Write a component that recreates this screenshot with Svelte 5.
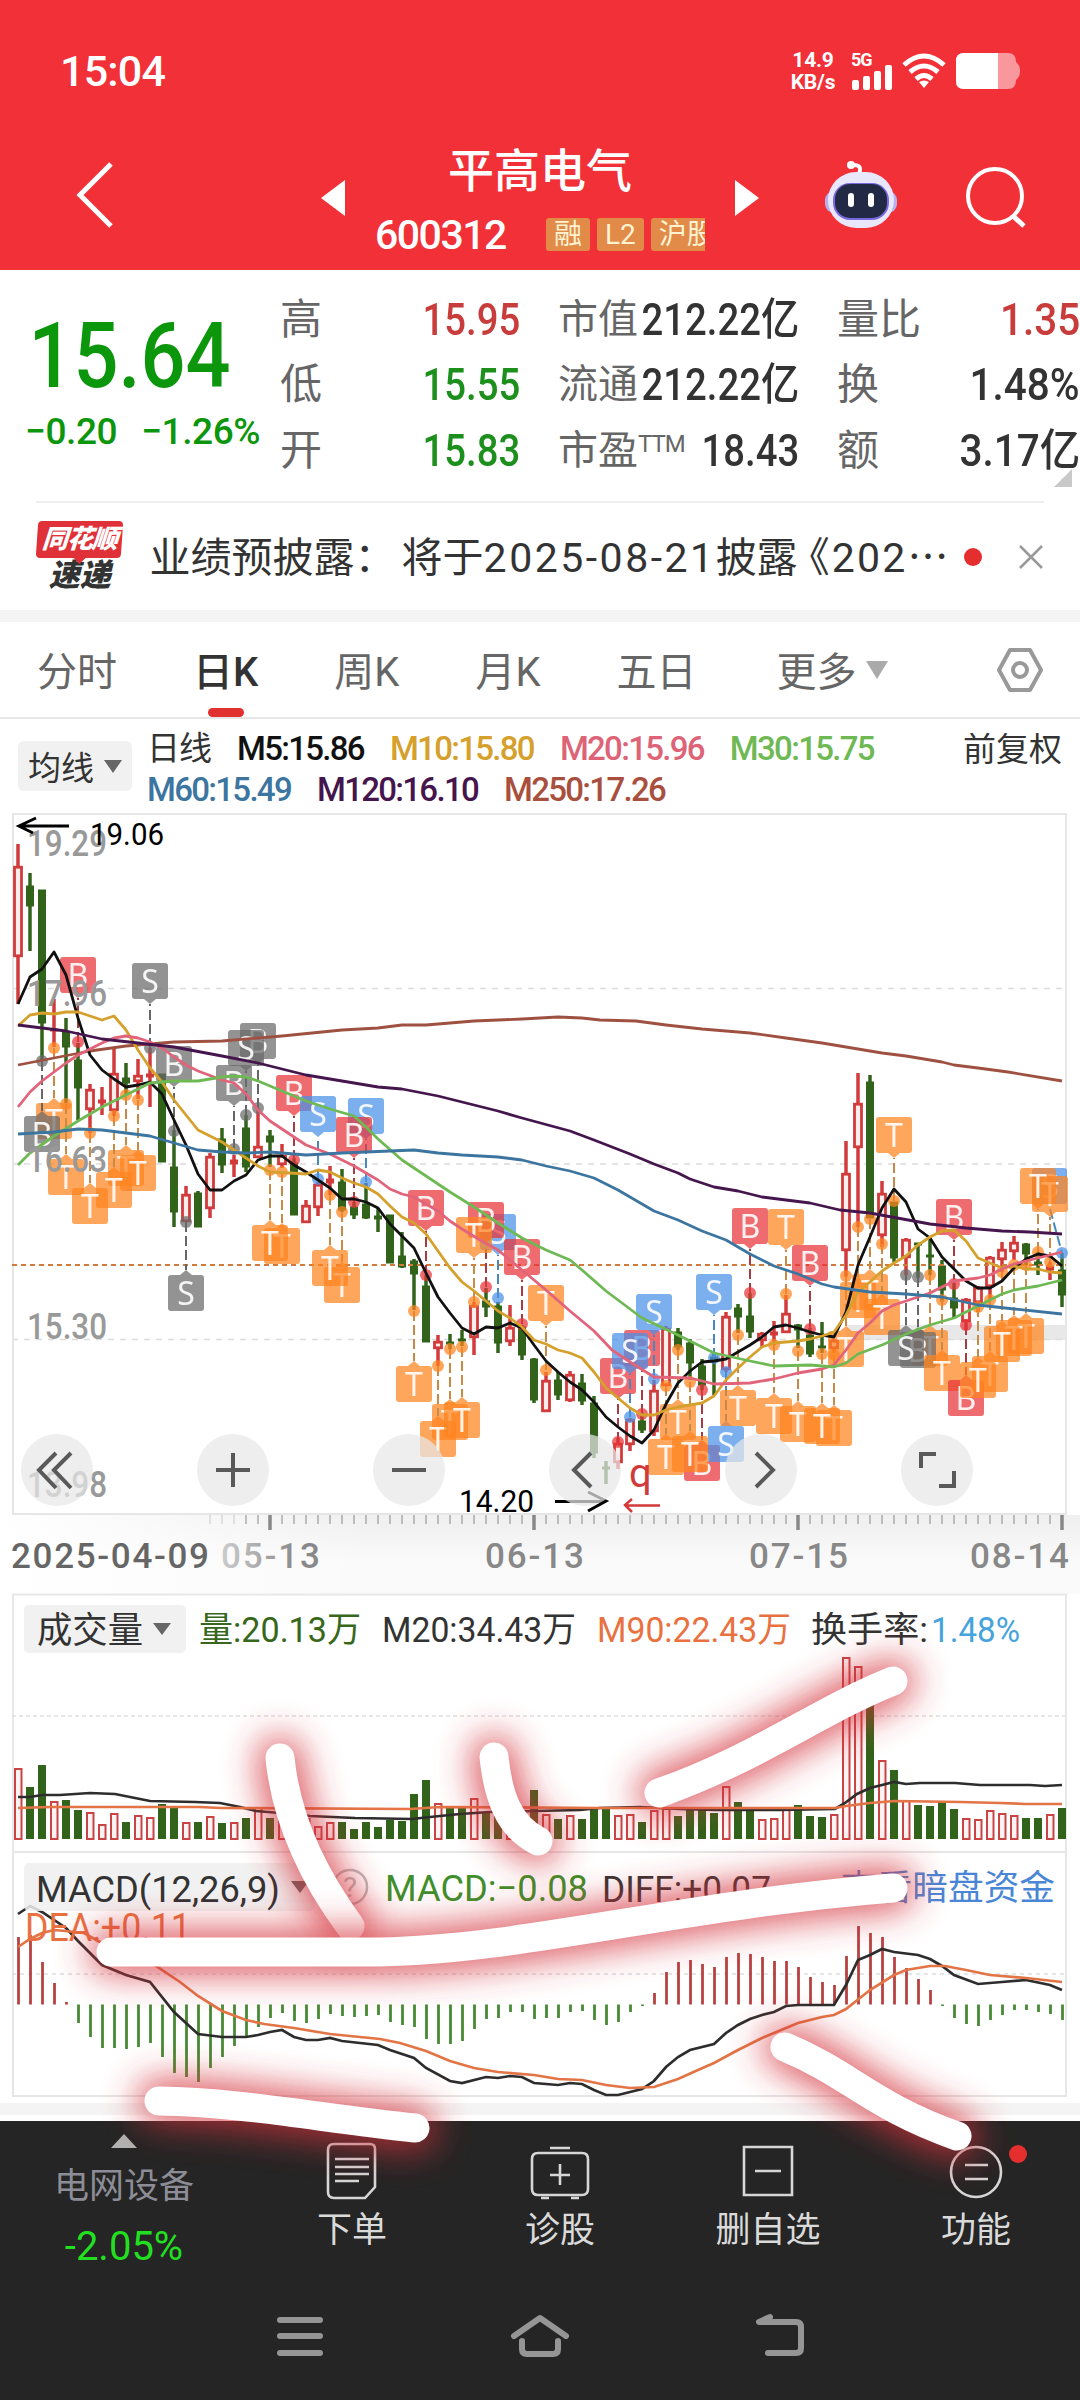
<script lang="ts">
  type Candle = [number, number, number, number, string];
  type Marker = [number, string, string, number, number];

  const x = (i: number) => 18 + i * 12;

  const tabs = ['分时', '日K', '周K', '月K', '五日'];

  const quotes = [
    ['高', '15.95', 'up', '市值', '212.22亿', '量比', '1.35', 'up'],
    ['低', '15.55', 'down', '流通', '212.22亿', '换', '1.48%', ''],
    ['开', '15.83', 'down', '市盈', '18.43', '额', '3.17亿', ''],
  ];

  // high, body top, body bottom, low (chart y), r = rise / g = fall
  const candles: Candle[] = [
    [844, 866, 957, 1004, 'r'], [873, 886, 906, 951, 'g'], [890, 890, 1023, 1060, 'g'],
    [999, 1029, 1031, 1047, 'r'], [1018, 1032, 1047, 1103, 'g'], [1043, 1060, 1088, 1120, 'g'],
    [1084, 1089, 1110, 1133, 'r'], [1087, 1100, 1103, 1115, 'r'], [1047, 1073, 1111, 1116, 'r'],
    [1063, 1078, 1083, 1095, 'g'], [1059, 1075, 1082, 1099, 'r'], [1048, 1074, 1077, 1107, 'r'],
    [1074, 1074, 1162, 1162, 'g'], [1130, 1167, 1212, 1227, 'g'], [1186, 1194, 1222, 1222, 'r'],
    [1191, 1193, 1227, 1227, 'g'], [1153, 1156, 1209, 1218, 'r'], [1128, 1139, 1165, 1173, 'g'],
    [1155, 1160, 1164, 1177, 'r'], [1115, 1128, 1167, 1172, 'g'], [1108, 1146, 1158, 1158, 'r'],
    [1130, 1136, 1142, 1167, 'g'], [1144, 1155, 1165, 1168, 'r'], [1158, 1163, 1215, 1215, 'g'],
    [1200, 1205, 1223, 1223, 'r'], [1182, 1184, 1208, 1216, 'r'], [1166, 1179, 1183, 1195, 'r'],
    [1169, 1182, 1210, 1212, 'g'], [1202, 1207, 1215, 1219, 'g'], [1183, 1204, 1218, 1219, 'g'],
    [1208, 1216, 1219, 1232, 'g'], [1215, 1215, 1263, 1263, 'g'], [1232, 1256, 1267, 1268, 'g'],
    [1259, 1261, 1274, 1310, 'g'], [1275, 1286, 1342, 1342, 'g'], [1335, 1341, 1349, 1366, 'r'],
    [1334, 1342, 1344, 1349, 'g'], [1330, 1339, 1341, 1346, 'g'], [1302, 1305, 1338, 1355, 'r'],
    [1288, 1301, 1307, 1317, 'g'], [1302, 1306, 1343, 1353, 'g'], [1305, 1327, 1342, 1346, 'r'],
    [1325, 1327, 1355, 1360, 'g'], [1358, 1359, 1400, 1403, 'g'], [1372, 1380, 1412, 1412, 'r'],
    [1372, 1380, 1395, 1400, 'g'], [1371, 1374, 1401, 1402, 'r'], [1374, 1383, 1401, 1405, 'g'],
    [1396, 1403, 1453, 1458, 'g'], [1461, 1467, 1469, 1484, 'g'], [1438, 1443, 1463, 1469, 'r'],
    [1418, 1419, 1445, 1451, 'r'], [1413, 1421, 1430, 1433, 'g'], [1380, 1390, 1432, 1436, 'r'],
    [1326, 1328, 1386, 1386, 'r'], [1328, 1332, 1347, 1350, 'g'], [1339, 1343, 1363, 1380, 'g'],
    [1359, 1366, 1385, 1390, 'g'], [1353, 1357, 1360, 1395, 'g'], [1312, 1316, 1370, 1372, 'r'],
    [1304, 1308, 1317, 1333, 'g'], [1293, 1316, 1332, 1338, 'g'], [1332, 1333, 1341, 1347, 'r'],
    [1321, 1332, 1335, 1345, 'r'], [1295, 1313, 1333, 1333, 'r'], [1324, 1325, 1330, 1348, 'g'],
    [1328, 1335, 1354, 1357, 'g'], [1322, 1346, 1348, 1353, 'g'], [1339, 1340, 1349, 1353, 'r'],
    [1141, 1173, 1251, 1277, 'r'], [1073, 1103, 1148, 1227, 'r'], [1075, 1082, 1218, 1218, 'g'],
    [1181, 1193, 1236, 1247, 'r'], [1202, 1202, 1258, 1262, 'g'], [1238, 1239, 1258, 1275, 'r'],
    [1243, 1243, 1245, 1278, 'g'], [1238, 1255, 1257, 1275, 'g'], [1260, 1266, 1290, 1302, 'g'],
    [1283, 1298, 1308, 1318, 'g'], [1298, 1299, 1322, 1330, 'r'], [1286, 1287, 1303, 1312, 'r'],
    [1256, 1257, 1287, 1300, 'r'], [1242, 1249, 1260, 1272, 'r'], [1236, 1242, 1252, 1260, 'r'],
    [1243, 1244, 1254, 1265, 'g'], [1252, 1262, 1265, 1275, 'g'], [1262, 1266, 1270, 1280, 'r'],
    [1253, 1270, 1295, 1307, 'g'],
  ];

  // candle index, letter, kind, badge top, dot y
  const markers: Marker[] = [
    [5, 'B', 'red', 957, 1042], [13, 'B', 'grey', 1046, 1131],
    [3, 'T', 'orange', 1103, 1048], [4, 'T', 'orange', 1159, 1104], [2, 'B', 'grey', 1116, 1061],
    [9, 'T', 'orange', 1150, 1095], [10, 'T', 'orange', 1155, 1100], [8, 'T', 'orange', 1172, 1116],
    [6, 'T', 'orange', 1188, 1133], [11, 'S', 'grey', 963, 1048], [20, 'B', 'grey', 1023, 1108],
    [19, 'S', 'grey', 1030, 1115], [18, 'B', 'grey', 1065, 1149], [23, 'B', 'red', 1075, 1160],
    [25, 'S', 'blue', 1096, 1179], [29, 'S', 'blue', 1098, 1182], [28, 'B', 'red', 1117, 1202],
    [14, 'S', 'grey', 1275, 1222], [22, 'T', 'orange', 1228, 1172], [21, 'T', 'orange', 1225, 1170],
    [27, 'T', 'orange', 1267, 1212], [26, 'T', 'orange', 1250, 1195], [34, 'B', 'red', 1190, 1275],
    [33, 'T', 'orange', 1366, 1311], [36, 'T', 'orange', 1404, 1349], [35, 'T', 'orange', 1421, 1366],
    [37, 'T', 'orange', 1402, 1347], [40, 'S', 'blue', 1214, 1298], [39, 'B', 'red', 1202, 1287],
    [38, 'T', 'orange', 1217, 1302], [42, 'B', 'red', 1239, 1324], [44, 'T', 'orange', 1285, 1370],
    [52, 'B', 'red', 1330, 1414], [50, 'B', 'red', 1358, 1442], [51, 'S', 'blue', 1333, 1417],
    [53, 'S', 'blue', 1294, 1379], [55, 'T', 'orange', 1404, 1350], [54, 'T', 'orange', 1439, 1386],
    [57, 'B', 'red', 1445, 1390], [56, 'T', 'orange', 1436, 1382], [58, 'S', 'blue', 1274, 1358],
    [59, 'S', 'blue', 1426, 1372], [60, 'T', 'orange', 1390, 1335], [61, 'B', 'red', 1208, 1293],
    [63, 'T', 'orange', 1398, 1345], [64, 'T', 'orange', 1209, 1294], [65, 'T', 'orange', 1406, 1351],
    [68, 'T', 'orange', 1410, 1355], [67, 'T', 'orange', 1408, 1354], [66, 'B', 'red', 1245, 1329],
    [69, 'T', 'orange', 1331, 1276], [70, 'T', 'orange', 1282, 1227], [71, 'T', 'orange', 1274, 1219],
    [72, 'T', 'orange', 1299, 1244], [73, 'T', 'orange', 1117, 1201], [76, 'T', 'orange', 1330, 1275],
    [75, 'B', 'grey', 1332, 1277], [74, 'S', 'grey', 1330, 1275], [77, 'T', 'orange', 1355, 1300],
    [78, 'B', 'red', 1199, 1284], [79, 'B', 'red', 1380, 1325], [81, 'T', 'orange', 1356, 1300],
    [80, 'T', 'orange', 1362, 1307], [84, 'T', 'orange', 1318, 1265], [83, 'T', 'orange', 1320, 1265],
    [82, 'T', 'orange', 1326, 1272], [86, 'T', 'orange', 1176, 1262], [85, 'T', 'orange', 1168, 1252],
  ];

  const averages = [
    { color: '#9f5141', points: '18,1065 54,1058 90,1051 126,1046 174,1042 222,1041 282,1036 342,1030 378,1028 402,1025 426,1025 474,1021 522,1019 558,1017 582,1018 600,1020 636,1021 666,1025 702,1029 726,1031 750,1033 786,1038 822,1043 858,1049 882,1053 906,1056 942,1062 954,1065 978,1068 1008,1072 1062,1081' },
    { color: '#111', points: '18,1004 30,977 42,969 54,952 66,975 78,1018 90,1055 102,1070 114,1079 126,1087 138,1085 150,1082 162,1094 174,1120 186,1145 198,1174 210,1190 222,1190 234,1181 246,1175 258,1160 270,1156 282,1156 294,1165 306,1172 318,1180 330,1188 342,1199 354,1199 366,1202 378,1208 390,1224 402,1236 414,1248 426,1273 438,1297 450,1313 462,1328 474,1334 486,1327 498,1328 510,1323 522,1328 534,1345 546,1361 558,1372 570,1382 582,1390 594,1402 606,1417 618,1427 630,1436 642,1443 654,1430 666,1404 678,1383 690,1371 702,1362 714,1361 726,1359 738,1352 750,1345 762,1337 774,1327 786,1325 798,1328 810,1332 822,1335 834,1337 846,1312 858,1265 870,1237 882,1208 894,1189 906,1202 918,1229 930,1238 942,1257 954,1269 966,1281 978,1288 990,1288 1002,1281 1014,1268 1026,1259 1038,1254 1050,1256 1062,1266' },
    { color: '#d6a02c', points: '18,1026 30,1015 42,1013 54,1014 66,1012 78,1012 90,1016 102,1020 114,1016 126,1030 138,1050 150,1068 162,1082 174,1100 186,1115 198,1130 222,1142 234,1150 246,1158 258,1166 270,1172 290,1173 306,1174 318,1170 330,1172 342,1178 354,1183 366,1187 378,1194 390,1206 402,1217 414,1223 426,1234 438,1251 450,1268 462,1282 474,1291 486,1301 498,1311 510,1318 522,1327 534,1340 546,1344 558,1350 570,1353 582,1358 594,1372 606,1388 618,1398 630,1408 642,1415 654,1415 666,1410 678,1407 690,1405 702,1403 714,1396 726,1380 738,1368 750,1357 762,1347 774,1343 798,1341 810,1339 822,1336 834,1332 846,1315 858,1292 870,1282 882,1271 894,1263 906,1256 918,1245 930,1237 942,1231 954,1230 966,1241 978,1258 990,1263 1002,1268 1014,1266 1026,1269 1038,1269 1050,1272 1062,1273' },
    { color: '#e2647a', points: '18,1107 30,1092 42,1081 54,1072 66,1063 78,1055 90,1049 102,1043 114,1038 126,1036 138,1038 150,1042 162,1048 174,1057 186,1065 198,1071 222,1080 234,1083 246,1094 258,1110 270,1121 282,1129 306,1145 330,1154 342,1160 354,1166 378,1180 390,1189 402,1194 414,1197 426,1204 438,1211 450,1221 462,1229 480,1240 498,1250 522,1270 546,1290 570,1311 594,1331 612,1350 630,1362 654,1377 690,1378 714,1384 750,1383 774,1379 798,1373 822,1369 834,1365 846,1350 858,1333 870,1323 882,1311 894,1305 906,1301 930,1293 942,1287 954,1281 978,1278 990,1275 1002,1269 1014,1264 1038,1258 1062,1252' },
    { color: '#6fb955', points: '18,1165 30,1153 54,1136 78,1121 102,1107 126,1095 150,1083 174,1081 198,1081 222,1077 234,1076 246,1077 258,1081 282,1091 306,1101 330,1109 354,1116 366,1127 378,1139 402,1160 426,1176 450,1192 474,1207 498,1223 522,1238 546,1250 570,1260 582,1270 606,1291 642,1318 678,1335 714,1353 750,1361 774,1366 810,1365 834,1367 846,1363 858,1354 882,1345 906,1334 930,1325 954,1318 978,1306 1002,1294 1014,1290 1038,1286 1062,1280' },
    { color: '#3c759f', points: '18,1134 54,1132 78,1129 102,1130 126,1133 150,1136 174,1143 198,1150 222,1152 246,1153 270,1152 306,1155 342,1153 366,1152 390,1151 414,1150 438,1153 462,1155 498,1157 522,1160 546,1166 570,1171 594,1178 618,1190 654,1211 678,1220 702,1231 726,1240 750,1254 774,1266 798,1274 822,1284 834,1287 870,1292 906,1294 942,1297 978,1305 1014,1309 1062,1314' },
    { color: '#45154d', points: '18,1025 66,1031 102,1039 138,1043 174,1047 222,1056 258,1063 282,1069 306,1075 342,1081 378,1087 402,1089 438,1096 474,1105 498,1111 522,1118 570,1131 594,1140 630,1154 654,1164 678,1173 690,1179 714,1187 738,1191 762,1197 786,1200 810,1203 840,1210 870,1213 930,1224 966,1228 1002,1231 1030,1232 1062,1234' },
  ];

  const levels: [string, number][] = [['19.29', 856], ['17.96', 1006], ['16.63', 1172], ['15.30', 1339], ['13.98', 1497]];
  const dates: [string, number][] = [['06-13', 486], ['07-15', 750], ['08-14', 971]];
  const ticks = Array.from({ length: 72 }, (_, i) => 210 + i * 12);

  const volumes = [
    1768, 1787, 1765, 1801, 1800, 1810, 1812, 1824, 1813, 1822, 1815, 1817, 1804, 1806, 1822, 1822,
    1816, 1823, 1822, 1818, 1807, 1818, 1813, 1825, 1818, 1826, 1822, 1822, 1829, 1822, 1827, 1820,
    1821, 1794, 1780, 1803, 1808, 1806, 1798, 1812, 1812, 1817, 1813, 1790, 1814, 1819, 1815, 1819,
    1809, 1808, 1815, 1814, 1822, 1810, 1808, 1816, 1809, 1810, 1813, 1786, 1802, 1810, 1819, 1818,
    1807, 1805, 1816, 1817, 1814, 1657, 1666, 1700, 1760, 1770, 1800, 1805, 1806, 1801, 1809, 1818,
    1819, 1810, 1813, 1815, 1818, 1818, 1814, 1808,
  ];

  const macd = [
    1937, 1935, 1962, 1983, 2002, 2023, 2037, 2048, 2048, 2049, 2047, 2043, 2057, 2073, 2077, 2082,
    2068, 2057, 2046, 2036, 2027, 2018, 2013, 2021, 2023, 2019, 2014, 2016, 2017, 2016, 2015, 2022,
    2025, 2027, 2039, 2044, 2044, 2041, 2029, 2019, 2018, 2012, 2012, 2019, 2018, 2018, 2012, 2011,
    2020, 2025, 2022, 2012, 2006, 1993, 1972, 1962, 1960, 1964, 1967, 1957, 1953, 1954, 1957, 1961,
    1961, 1967, 1977, 1982, 1985, 1956, 1926, 1933, 1937, 1957, 1968, 1979, 1990, 2006, 2018, 2024,
    2026, 2020, 2015, 2010, 2010, 2012, 2014, 2020,
  ];

  const strokes = [
    'M280 1758C285 1808 306 1866 350 1926',
    'M494 1757C498 1795 508 1826 538 1841',
    'M893 1681C820 1710 760 1757 659 1793',
    'M111 1952H380C520 1950 680 1905 893 1888',
    'M159 2101C240 2102 320 2118 415 2128',
    'M785 2047C850 2074 872 2106 957 2136',
  ];
</script>

{#snippet label(text: string, left: number, base: number, size: number, width: number, fill: string)}
  <text x={left} y={base} font-size={size} textLength={width} lengthAdjust="spacingAndGlyphs" {fill}>{text}</text>
{/snippet}

<div class="page">
  <header>
    <div class="status">
      <span class="clock">15:04</span>
      <div class="status-right">
        <div class="speed"><span>14.9</span><span>KB/s</span></div>
        <div class="signal">
          <span>5G</span>
          <svg width="42" height="25" viewBox="0 0 42 25" fill="#fff">
            <rect x="1" y="15" width="7" height="10" rx="2" />
            <rect x="12" y="11" width="7" height="14" rx="2" />
            <rect x="23" y="6" width="7" height="19" rx="2" />
            <rect x="34" y="0" width="7" height="25" rx="2" />
          </svg>
        </div>
        <svg class="wifi" width="44" height="36" viewBox="0 0 44 36">
          <g fill="none" stroke="#fff" stroke-width="5">
            <path d="M2 12Q22 -6 42 12" />
            <path d="M8 19Q22 7 36 19" />
            <path d="M14 26Q22 19 30 26" />
          </g>
          <path d="M17 29Q22 26 27 29L22 35Z" fill="#fff" />
        </svg>
        <svg width="64" height="36" viewBox="0 0 64 36">
          <path d="M8 0H52Q60 0 60 9Q64 12 64 18Q64 24 60 27Q60 36 52 36H8Q0 36 0 28V8Q0 0 8 0Z" fill="#fff" opacity=".5" />
          <path d="M8 0H42V36H8Q0 36 0 28V8Q0 0 8 0Z" fill="#fff" />
        </svg>
      </div>
    </div>

    <div class="title-bar">
      <svg class="back" width="40" height="68" viewBox="0 0 40 68"><path d="M36 3L5 34L36 65" fill="none" stroke="#fff" stroke-width="5" /></svg>
      <svg class="prev" width="24" height="36" viewBox="0 0 24 36"><path d="M24 0V36L0 18Z" fill="#fff" /></svg>
      <div class="stock">
        <h1>平高电气</h1>
        <div class="code-row">
          <span class="code">600312</span>
          <div class="tags"><i>融</i><i>L2</i><i>沪股</i></div>
        </div>
      </div>
      <svg class="next" width="24" height="36" viewBox="0 0 24 36"><path d="M0 0V36L24 18Z" fill="#fff" /></svg>
      <svg class="robot" width="72" height="68" viewBox="0 0 72 68">
        <path d="M34 13Q38 3 27 4" fill="none" stroke="#fff" stroke-width="4" stroke-linecap="round" />
        <circle cx="26" cy="4" r="4" fill="#fff" />
        <rect x="0" y="30" width="72" height="22" rx="9" fill="#b9b0ee" />
        <rect x="3" y="11" width="66" height="56" rx="28" fill="#e9e7fb" />
        <rect x="8" y="22" width="56" height="37" rx="17" fill="#7a68df" />
        <rect x="10" y="23" width="52" height="34" rx="15" fill="#222945" />
        <rect x="23" y="32" width="6" height="14" rx="3" fill="#fff" />
        <rect x="43" y="32" width="6" height="14" rx="3" fill="#fff" />
      </svg>
      <svg class="search" width="62" height="62" viewBox="0 0 62 62" fill="none" stroke="#fff" stroke-width="4">
        <circle cx="30" cy="30" r="27" /><path d="M48 50L59 60" stroke-width="5" />
      </svg>
    </div>
  </header>

  <section class="quote">
    <div class="price">
      <strong>15.64</strong>
      <div class="change"><span>−0.20</span><span>−1.26%</span></div>
    </div>
    <div class="stats">
      {#each quotes as q, i}
        <span class="name">{q[0]}</span>
        <b class={q[2]}>{q[1]}</b>
        <span class="name second">{q[3]}{#if i === 2}<sup>TTM</sup>{/if}</span>
        <b>{q[4]}</b>
        <span class="name third">{q[5]}</span>
        <b class="last {q[7]}">{q[6]}</b>
      {/each}
    </div>
    <svg class="corner" width="18" height="18"><path d="M18 0V18H0Z" fill="#c9c9c9" /></svg>
  </section>

  <section class="news">
    <div class="logo">
      <span class="logo-top">同花顺</span>
      <span class="logo-bottom">速递</span>
    </div>
    <p>业绩预披露：<span class="rest">将于<span class="date">2025-08-21</span>披露</span><span class="book">《202⋯</span></p>
    <i class="dot"></i>
    <svg width="26" height="26" viewBox="0 0 26 26"><path d="M2 2L24 24M24 2L2 24" stroke="#999" stroke-width="2.5" /></svg>
  </section>

  <nav class="tabs">
    {#each tabs as tab}
      <span class:active={tab === '日K'}>{tab}</span>
    {/each}
    <span class="more">更多<i></i></span>
    <svg width="48" height="48" viewBox="0 0 48 48" fill="none" stroke="#999" stroke-width="4">
      <path d="M14 4H34L45 24L34 44H14L3 24Z" stroke-linejoin="round" /><circle cx="24" cy="24" r="7" />
    </svg>
  </nav>

  <section class="legend">
    <span class="select">均线<i></i></span>
    <div class="legend-lines">
      <div>
        <span class="day">日线</span>
        <span class="m5">M5:15.86</span>
        <span class="m10">M10:15.80</span>
        <span class="m20">M20:15.96</span>
        <span class="m30">M30:15.75</span>
      </div>
      <div>
        <span class="m60">M60:15.49</span>
        <span class="m120">M120:16.10</span>
        <span class="m250">M250:17.26</span>
      </div>
    </div>
    <span class="adjust">前复权</span>
  </section>

  <section class="chart">
    <svg width="1080" height="702" viewBox="0 813 1080 702">
      <rect x="846" y="1325" width="220" height="15" fill="#e8e8e8" />
      <g stroke="#dcdcdc" stroke-width="1.3" stroke-dasharray="6 6">
        <path d="M12 988.5H1066M12 1164H1066M12 1339.5H1066" />
      </g>
      <rect x="13" y="814" width="1053" height="700" fill="none" stroke="#e6e6e6" stroke-width="2" />
      {#each candles as [high, top, bottom, low, kind], i}
        <g class={kind === 'r' ? 'rise' : 'fall'}>
          {#if kind === 'r' && bottom - top > 6}
            <path d="M{x(i)} {high}V{top}M{x(i)} {bottom}V{low}" />
            <rect x={x(i) - 3.5} y={top + 1.2} width="7" height={bottom - top - 2.4} class="hollow" />
          {:else}
            <path d="M{x(i)} {high}V{low}" />
            <rect x={x(i) - 3.5} y={top} width="7" height={bottom - top} class="solid" />
          {/if}
        </g>
      {/each}
      <path d="M12 1265H1066" stroke="#d07a3c" stroke-width="2" stroke-dasharray="5 4" />
      <g class="marker blue">
        <path class="lead" d="M1050 1209L1062 1253" />
        <circle cx="1062" cy="1253" r="6" />
        <rect x="1032" y="1168" width="35" height="36" rx="3" />
        <text x="1050" y="1198" text-anchor="middle">S</text>
      </g>
      {#each markers as [i, letter, kind, top, dot]}
        <g class="marker {kind}">
          <path class="lead" d="M{x(i)} {dot}V{top > dot ? top - 5 : top + 41}" />
          <circle cx={x(i)} cy={dot} r="6" />
          {#if top > dot}
            <path d="M{x(i) - 6} {top}L{x(i)} {top - 5}L{x(i) + 6} {top}Z" />
          {:else}
            <path d="M{x(i) - 6} {top + 36}L{x(i)} {top + 41}L{x(i) + 6} {top + 36}Z" />
          {/if}
          <rect x={x(i) - 18} y={top} width="36" height="36" rx="3" />
          <text x={x(i)} y={top + 30} text-anchor="middle">{letter}</text>
        </g>
      {/each}
      {#each averages as line}
        <polyline points={line.points} fill="none" stroke={line.color} stroke-width="2.8" stroke-linejoin="round" />
      {/each}
      <g class="levels">
        {#each levels as [text, base]}
          {@render label(text, 27, base, 36, 80, '#999')}
        {/each}
      </g>
      {@render label('19.06', 90, 845, 32, 74, '#000')}
      {@render label('14.20', 459, 1512, 32, 75, '#000')}
      <g fill="none" stroke="#000" stroke-width="3">
        <path d="M69 826H19M36 818L19 826L33 833" />
        <path d="M555 1501.500H606M588 1492L606 1501L588 1511" />
      </g>
      <text class="q" x="629" y="1487">q</text>
      <path d="M660 1505.500H625M632 1499L625 1505L632 1512" fill="none" stroke="#d23a3a" stroke-width="2.5" />
    </svg>
    <div class="controls">
      <span><svg viewBox="0 0 72 72"><path d="M35 19L18 36L35 54M50 19L33 36L50 54" /></svg></span>
      <span><svg viewBox="0 0 72 72"><path d="M19 36H53M36 19V53" /></svg></span>
      <span><svg viewBox="0 0 72 72"><path d="M19 36H53" /></svg></span>
      <span><svg viewBox="0 0 72 72"><path d="M42 19L25 36L42 53" /></svg></span>
      <span><svg viewBox="0 0 72 72"><path d="M31 19L48 36L31 53" /></svg></span>
      <span><svg viewBox="0 0 72 72"><path d="M20 34V20H35M38 52H53V37" /></svg></span>
    </div>
  </section>

  <section class="axis">
    <svg width="1080" height="79" viewBox="0 1515 1080 79">
      <defs>
        <linearGradient id="fade" x1="0" x2="1">
          <stop offset="0" stop-color="#ccc" />
          <stop offset=".8" stop-color="#888" />
        </linearGradient>
      </defs>
      {#each ticks as t}
        {#if (t - 6) % 264 === 0}
          <path d="M{t} 1515V1530" stroke="#888" stroke-width="3.500" />
        {:else}
          <path d="M{t} 1515V1524" stroke="#999" stroke-width="1.200" opacity={t < 240 ? 0.4 : 1} />
        {/if}
      {/each}
      <text x="11" y="1568" textLength="198" fill="#666">2025-04-09</text>
      <text x="221" y="1568" textLength="99" fill="url(#fade)">05-13</text>
      {#each dates as [text, left]}
        <text x={left - 1} y="1568" textLength="99" fill="#888">{text}</text>
      {/each}
    </svg>
  </section>

  <section class="volume">
    <svg width="1080" height="257" viewBox="0 1594 1080 257">
      <path d="M13 1851V1594.500H1066V1851" fill="none" stroke="#e8e8e8" stroke-width="2" />
      <path d="M12 1716H1066" stroke="#e0e0e0" stroke-width="1.500" stroke-dasharray="4 3" />
      <rect x="24" y="1605" width="162" height="48" rx="5" fill="#f1f1f1" />
      <path d="M153 1623H171L162 1635Z" fill="#666" />
      {@render label('成交量', 37, 1643, 36, 106, '#333')}
      {@render label('量:20.13万', 199, 1642, 35, 162, '#36671a')}
      {@render label('M20:34.43万', 382, 1642, 35, 194, '#333')}
      {@render label('M90:22.43万', 597, 1642, 35, 194, '#e9713f')}
      {@render label('换手率:', 811, 1642, 35, 117, '#333')}
      {@render label('1.48%', 931, 1642, 35, 89, '#45a3dd')}
      {#each volumes as top, i}
        {#if candles[i][4] === 'r'}
          <rect x={x(i) - 3} y={top + 1} width="6.500" height={1838 - top} fill="#fff3f3" stroke="#c94444" stroke-width="2" />
        {:else}
          <rect x={x(i) - 4} y={top} width="8" height={1839 - top} fill="#32631a" />
        {/if}
      {/each}
      <polyline class="black-line" points="18,1797 30,1797 42,1795 60,1795 75,1794 90,1793 115,1794 130,1797 150,1801 195,1802 220,1803 240,1807 256,1811 280,1813 310,1816 355,1818 412,1819 430,1817 460,1814 490,1812 535,1811 580,1810 600,1808 640,1807 680,1809 715,1810 780,1810 835,1809 845,1803 857,1794 870,1788 882,1785 894,1782 906,1784 920,1783 955,1783 980,1785 1030,1785 1045,1786 1062,1785" />
      <polyline class="orange-line" points="18,1808 50,1807 200,1807 220,1808 410,1809 440,1807 600,1808 835,1808 846,1806 870,1803 895,1801 960,1802 1000,1803 1025,1804 1062,1804" />
    </svg>
  </section>

  <section class="macd">
    <svg width="1080" height="252" viewBox="0 1851 1080 252">
      <rect x="13" y="1852" width="1053" height="244" fill="none" stroke="#e6e6e6" stroke-width="2" />
      <path d="M12 1974H1066" stroke="#ddd" stroke-width="1.500" stroke-dasharray="4 4" />
      {#each macd as end, i}
        <path d="M{x(i) + 0.5} 2004.500V{end}" stroke={end < 2004 ? '#b74242' : '#478b35'} stroke-width="2.800" />
      {/each}
      <polyline class="black-line" points="18,1914 30,1906 42,1912 66,1928 78,1941 102,1965 126,1975 150,1982 174,2012 198,2034 222,2037 246,2037 258,2035 270,2032 282,2030 294,2037 306,2040 318,2040 330,2038 342,2041 378,2045 390,2050 414,2058 426,2068 450,2081 462,2083 486,2077 498,2078 510,2076 522,2077 534,2083 558,2085 570,2083 582,2084 594,2090 606,2095 618,2095 642,2089 654,2081 666,2067 678,2057 690,2050 714,2044 726,2033 738,2025 750,2019 762,2015 774,2012 786,2006 798,2005 834,2005 846,1985 858,1960 870,1955 882,1949 894,1952 918,1955 930,1959 942,1966 954,1975 978,1984 1002,1982 1026,1980 1050,1985 1062,1990" />
      <rect x="24" y="1863" width="291" height="48" rx="5" fill="#eee" opacity=".85" />
      <polyline class="orange-line" points="18,1947 30,1939 42,1933 54,1930 66,1931 84,1933 98,1941 130,1955 156,1966 180,1982 198,1996 222,2011 246,2020 264,2024 294,2028 330,2034 380,2039 400,2043 426,2051 450,2061 474,2068 498,2072 534,2075 558,2079 582,2080 606,2085 630,2088 654,2087 678,2079 698,2070 714,2063 738,2050 762,2038 798,2023 822,2017 834,2015 846,2009 870,1990 894,1975 906,1970 930,1966 945,1966 966,1970 990,1975 1026,1978 1062,1982" />
      <path d="M291 1881H309L300 1893Z" fill="#666" />
      <circle cx="350" cy="1887" r="17" fill="none" stroke="#bbb" stroke-width="2.500" />
      {@render label('?', 343, 1897, 28, 14, '#bbb')}
      {@render label('MACD(12,26,9)', 36, 1902, 37, 244, '#333')}
      {@render label('MACD:−0.08', 385, 1901, 37, 203, '#3f8f2c')}
      {@render label('DIFF:+0.07', 602, 1902, 37, 169, '#333')}
      {@render label('查看暗盘资金', 841, 1900, 35, 214, '#4a86d6')}
      {@render label('DEA:+0.11', 25, 1941, 38, 166, '#e8713f')}
    </svg>
  </section>

  <footer>
    <div class="toolbar">
      <div class="sector">
        <i></i>
        <span>电网设备</span>
        <b>-2.05%</b>
      </div>
      <div class="tool">
        <svg viewBox="0 0 60 60"><path d="M12 3H48Q53 3 53 8V46L43 57H12Q6 57 6 51V9Q6 3 12 3ZM13 18H47M13 26H47M13 33H47M13 40H37" /></svg>
        <span>下单</span>
      </div>
      <div class="tool">
        <svg viewBox="0 0 60 60"><path d="M8 12H52Q58 12 58 18V48Q58 54 52 54H8Q2 54 2 48V18Q2 12 8 12ZM20 7H40M30 23V44M20 34H40M11 57H19M41 57H49" /></svg>
        <span>诊股</span>
      </div>
      <div class="tool">
        <svg viewBox="0 0 60 60"><path d="M6 6H54V54H6ZM17 30H43" /></svg>
        <span>删自选</span>
      </div>
      <div class="tool">
        <svg viewBox="0 0 60 60"><circle cx="30" cy="31" r="25" /><path d="M19 24H42M19 38H42" /></svg>
        <span>功能</span>
        <i class="badge"></i>
      </div>
    </div>
    <div class="system">
      <svg viewBox="0 0 60 48"><path d="M10 6H50M10 22H50M10 39H50" /></svg>
      <svg viewBox="0 0 60 48"><path d="M4 22L30 4L56 22M12 27V35Q12 40 17 40H43Q48 40 48 35V27" /></svg>
      <svg viewBox="0 0 60 48"><path d="M20 3L9 8H46Q51 8 51 13V34Q51 39 46 39H18" /></svg>
    </div>
  </footer>

  <svg class="doodle" width="1080" height="640" viewBox="0 1620 1080 640">
    <defs>
      <filter id="glow" filterUnits="userSpaceOnUse" x="0" y="1620" width="1080" height="640">
        <feGaussianBlur stdDeviation="18" />
      </filter>
    </defs>
    {#each strokes as d}
      <path {d} stroke="#d4303a" stroke-width="44" opacity=".82" filter="url(#glow)" />
      <path {d} stroke="#fff" stroke-width="29" />
    {/each}
  </svg>
</div>

<style>
  :global(body) {
    margin: 0;
    background: #fff;
  }

  .page {
    position: relative;
    width: 1080px;
    height: 2400px;
    overflow: hidden;
    font-family: Roboto, 'Noto Sans CJK SC', sans-serif;
    color: #333;
  }

  svg {
    display: block;
    flex-shrink: 0;
    overflow: visible;
  }

  i {
    font-style: normal;
  }

  header {
    height: 270px;
    background: #f13038;
    color: #fff;
  }

  .status {
    display: flex;
    align-items: center;
    justify-content: space-between;
    height: 142px;
    padding: 0 60px;
    box-sizing: border-box;
  }

  .clock {
    font-size: 43px;
    font-weight: 500;
    letter-spacing: -0.8px;
  }

  .status-right {
    display: flex;
    align-items: center;
  }

  .speed {
    display: flex;
    flex-direction: column;
    align-items: center;
    width: 46px;
    margin-right: 15px;
    font-size: 21px;
    font-weight: 700;
    line-height: 22px;
    letter-spacing: -0.2px;
  }

  .signal {
    display: flex;
    flex-direction: column;
    width: 42px;
    height: 36px;
    font-size: 18px;
    font-weight: 700;
    line-height: 14px;
    letter-spacing: -1px;
  }

  .signal svg {
    margin-top: -2px;
  }

  .wifi {
    margin: 0 10px 0 9px;
  }

  .title-bar {
    display: flex;
    align-items: center;
    height: 128px;
    padding-left: 75px;
  }

  .back {
    margin-top: -22px;
  }

  .prev {
    margin-left: 206px;
  }

  .prev,
  .next {
    margin-top: -16px;
  }

  .stock {
    width: 330px;
    margin: -8px 30px 0 30px;
  }

  h1 {
    margin: -6px 0 0;
    font-size: 46px;
    font-weight: 500;
    line-height: 62px;
    text-align: center;
  }

  .code-row {
    display: flex;
    align-items: center;
    height: 56px;
  }

  .code {
    width: 171px;
    margin-top: 9px;
    font-size: 41px;
    font-weight: 500;
    letter-spacing: -1.5px;
  }

  .tags {
    display: flex;
    gap: 7px;
    width: 159px;
    margin-top: 9px;
    overflow: hidden;
  }

  .tags i {
    flex-shrink: 0;
    padding: 0 8px;
    border-radius: 3px;
    background: #e28a48;
    color: #fff3d2;
    font-size: 28px;
    line-height: 33px;
  }

  .robot {
    margin-left: 66px;
    margin-top: -22px;
  }

  .search {
    margin-left: 68px;
    margin-top: -18px;
  }

  .quote {
    position: relative;
    display: flex;
    height: 231px;
    margin: 0 0 0 24px;
  }

  .price {
    width: 257px;
    color: #0b960b;
  }

  .price strong {
    display: block;
    height: 82px;
    padding: 44px 0 0 5px;
    font-size: 90px;
    font-weight: 500;
    line-height: 86px;
    transform: scaleX(0.88);
    transform-origin: left;
  }

  .change {
    display: flex;
    gap: 24px;
    padding-top: 13px;
    margin-left: 1px;
    font-size: 37px;
    font-weight: 500;
    letter-spacing: -0.4px;
    line-height: 46px;
  }

  .stats {
    display: grid;
    grid-template-columns: 61px 179px 120px 159px 126px 155px;
    grid-auto-rows: 65.5px;
    align-items: center;
    padding-top: 17px;
  }

  .stats b {
    justify-self: end;
    color: #333;
    font-size: 44px;
    font-weight: 500;
    line-height: 60px;
    white-space: nowrap;
    transform: scaleX(0.87);
    transform-origin: right;
  }

  .stats b.last {
    transform: scaleX(0.92);
  }

  .stats b.up {
    color: #c93c3c;
  }

  .stats b.down {
    color: #1c8f1c;
  }

  .name {
    font-size: 42px;
    line-height: 60px;
    color: #666;
    white-space: nowrap;
  }

  .second {
    padding-left: 38px;
    font-size: 40px;
  }

  .third {
    padding-left: 38px;
  }

  sup {
    font-size: 24px;
    letter-spacing: -1px;
    vertical-align: 12px;
    line-height: 0;
  }

  .corner {
    position: absolute;
    right: 8px;
    bottom: 14px;
  }

  .news {
    display: flex;
    align-items: center;
    height: 109px;
    margin: 0 36px;
    border-top: 2px solid #eee;
    box-sizing: border-box;
  }

  .logo {
    display: flex;
    flex-direction: column;
    align-items: center;
    width: 88px;
    font-style: italic;
    font-weight: 900;
  }

  .logo-top {
    position: relative;
    padding: 0 5px;
    border-radius: 4px;
    background: #e03038;
    color: #fff;
    font-size: 26px;
    letter-spacing: -1px;
    line-height: 37px;
    transform: skewX(-4deg);
  }

  .logo-top::after {
    position: absolute;
    top: 37px;
    left: 38px;
    border: 6px solid transparent;
    border-top-color: #e03038;
    border-bottom: 0;
    content: '';
  }

  .logo-bottom {
    font-size: 31px;
    line-height: 35px;
  }

  .news p {
    width: 811px;
    margin: -6px 7px 0 26px;
    font-size: 41px;
    white-space: nowrap;
  }

  .rest {
    margin-left: 6px;
  }

  .date {
    letter-spacing: 2.5px;
  }

  .book {
    margin-left: -9px;
    letter-spacing: 2.2px;
  }

  .dot {
    width: 18px;
    height: 18px;
    margin-right: 36px;
    border-radius: 50%;
    background: #e52f2f;
  }

  .tabs {
    display: flex;
    align-items: center;
    height: 109px;
    padding-left: 37px;
    border-top: 12px solid #f4f4f4;
    border-bottom: 2px solid #e6e6e6;
    box-sizing: border-box;
    color: #666;
    font-size: 40px;
    line-height: 88px;
  }

  .tabs span {
    position: relative;
    padding-top: 6px;
    margin-right: 76px;
  }

  .tabs .active {
    color: #333;
    font-weight: 500;
  }

  .active::after {
    position: absolute;
    bottom: 0;
    left: 50%;
    width: 36px;
    height: 9px;
    margin-left: -18px;
    border-radius: 5px;
    background: #e03030;
    content: '';
  }

  .tabs .more {
    display: flex;
    align-items: center;
    gap: 9px;
    margin-right: 108px;
    margin-left: 4px;
  }

  .more i {
    border: 11px solid transparent;
    border-top: 18px solid #aaa;
    border-bottom: 0;
    transform: translateY(-3px);
  }

  .legend {
    display: flex;
    height: 94px;
    padding: 0 18px;
    font-size: 33px;
  }

  .select {
    display: flex;
    align-items: center;
    justify-content: center;
    gap: 10px;
    width: 114px;
    height: 50px;
    margin-top: 22px;
    border-radius: 6px;
    background: #f1f1f1;
    font-size: 33px;
  }

  .select i {
    border: 9px solid transparent;
    border-top: 13px solid #666;
    border-bottom: 0;
  }

  .legend-lines {
    flex: 1;
    padding: 9px 0 0 15px;
    font-weight: 500;
    letter-spacing: -1.7px;
  }

  .legend-lines div {
    display: flex;
    gap: 26px;
    height: 41px;
    line-height: 41px;
  }

  .day {
    font-weight: 400;
    letter-spacing: -1px;
  }

  .m5 {
    color: #111;
  }

  .m10 {
    color: #d6a02c;
  }

  .m20 {
    color: #dd6477;
  }

  .m30 {
    color: #6fb955;
  }

  .m60 {
    color: #3c759f;
  }

  .m120 {
    color: #45154d;
  }

  .m250 {
    color: #a8503d;
  }

  .adjust {
    padding-top: 10px;
    line-height: 41px;
  }

  .chart {
    position: relative;
    height: 702px;
  }

  .rise {
    fill: #d23b3b;
    stroke: #d23b3b;
    stroke-width: 3.5;
  }

  .rise .hollow {
    fill: #fdeeee;
    stroke-width: 2.8;
  }

  .fall {
    fill: #32631a;
    stroke: #32631a;
    stroke-width: 3.5;
  }

  .solid {
    stroke-width: 1;
  }

  .marker circle,
  .marker rect,
  .marker path {
    opacity: 0.72;
  }

  .marker .lead {
    fill: none;
    opacity: 1;
    stroke-width: 2;
    stroke-dasharray: 10 4;
  }

  .marker text {
    fill: #fff;
    font-family: 'Noto Sans', sans-serif;
    font-size: 32px;
    opacity: 0.9;
  }

  .red {
    fill: #e83338;
    stroke: none;
  }

  .red .lead {
    stroke: #a83a42;
  }

  .grey {
    fill: #696969;
  }

  .grey .lead {
    stroke: #666;
  }

  .orange {
    fill: #ff831f;
  }

  .orange .lead {
    stroke: #c98a45;
  }

  .blue {
    fill: #4a90e8;
  }

  .blue .lead {
    stroke: #4788bd;
  }

  .levels {
    font-weight: 500;
  }

  .q {
    fill: #d23a3a;
    font-size: 40px;
  }

  .controls {
    position: absolute;
    bottom: 9px;
    left: 21px;
    display: flex;
    gap: 104px;
  }

  .controls span {
    width: 72px;
    height: 72px;
    border-radius: 50%;
    background: rgba(232, 232, 232, 0.72);
  }

  .controls path {
    fill: none;
    stroke: #595959;
    stroke-width: 4;
  }

  .axis {
    height: 79px;
    background: linear-gradient(90deg, #fff, rgba(255, 255, 255, 0) 35%), linear-gradient(#efefef, #fafafa 60%);
    font-size: 35px;
    font-weight: 500;
  }

  .black-line,
  .orange-line {
    fill: none;
    stroke: #2d2d2d;
    stroke-width: 2.7;
  }

  .orange-line {
    stroke: #e27445;
  }

  .macd {
    height: 252px;
    border-bottom: 12px solid #f4f4f4;
  }

  footer {
    height: 279px;
    margin-top: 6px;
    background: #252525;
  }

  .toolbar {
    display: flex;
    height: 165px;
  }

  .sector {
    display: flex;
    flex-direction: column;
    align-items: center;
    width: 248px;
    color: #8d8d97;
    font-size: 35px;
  }

  .sector i {
    margin-top: 13px;
    border: 13px solid transparent;
    border-top: 0;
    border-bottom: 14px solid #b2b2b2;
  }

  .sector span {
    margin-top: 14px;
    line-height: 50px;
  }

  .sector b {
    margin-top: 10px;
    color: #22df22;
    font-size: 40px;
    font-weight: 400;
    line-height: 50px;
  }

  .tool {
    position: relative;
    display: flex;
    flex-direction: column;
    align-items: center;
    width: 208px;
    color: #dadada;
    font-size: 35px;
    line-height: 50px;
  }

  .tool svg {
    width: 60px;
    height: 60px;
    margin: 20px 0 5px;
    fill: none;
    stroke: #d6d6d6;
    stroke-width: 2.6;
  }

  .badge {
    position: absolute;
    top: 24px;
    right: 53px;
    width: 18px;
    height: 18px;
    border-radius: 50%;
    background: #e52f2f;
  }

  .system {
    display: flex;
    justify-content: center;
    gap: 180px;
    padding-top: 28px;
  }

  .system svg {
    width: 60px;
    height: 48px;
    fill: none;
    stroke: #959595;
    stroke-width: 6;
    stroke-linecap: round;
    stroke-linejoin: round;
  }

  .doodle {
    position: absolute;
    top: 1620px;
    left: 0;
    fill: none;
    stroke-linecap: round;
    pointer-events: none;
  }
</style>
